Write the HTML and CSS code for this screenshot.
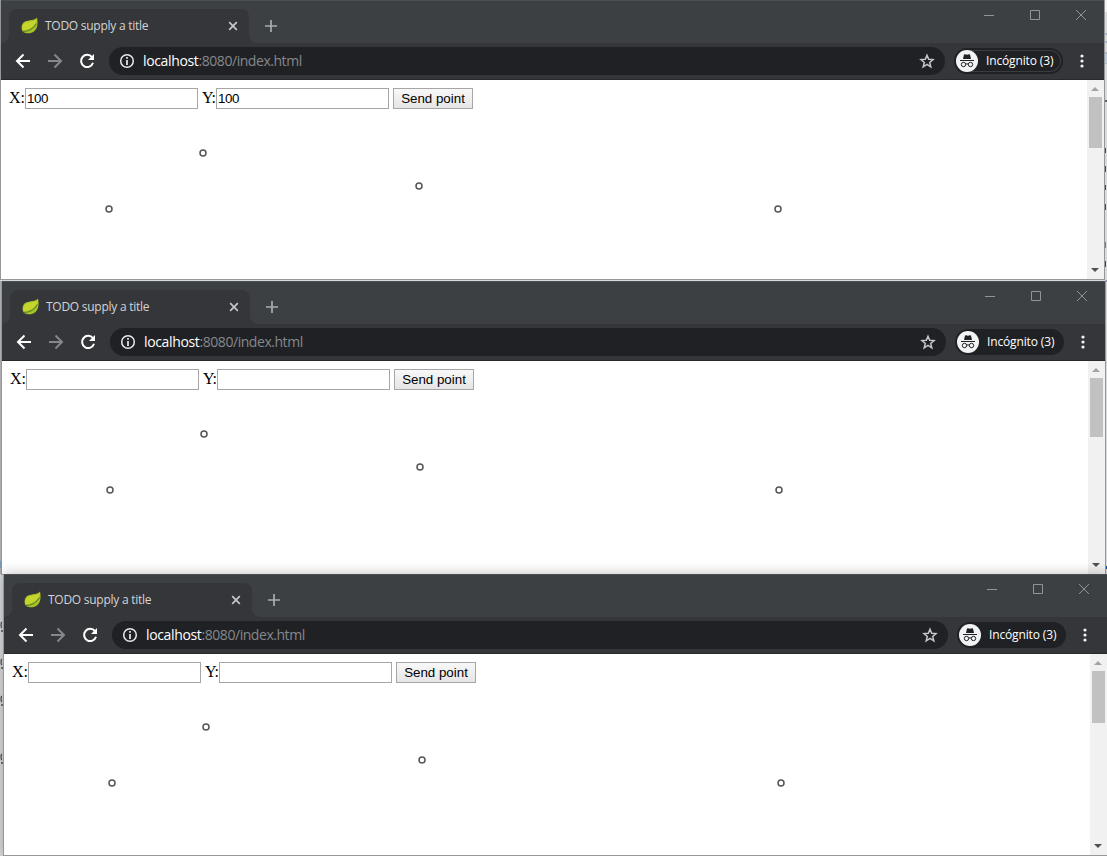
FILE: index.html
```html
<!DOCTYPE html>
<html lang="es">
<head>
<meta charset="utf-8">
<title>TODO supply a title</title>
<link rel="stylesheet" href="styles.css">
</head>
<body>
<svg class="defs" aria-hidden="true">
  <symbol id="leaf" viewBox="0 0 17 17"><path d="M16 .5C13.500 3.500 8 3 4 4.500C0 6.500-.2 12 2 14.800C4.500 17 10.500 16.800 13.500 14C17 10.700 17 5 16 .5Z" fill="#a6c225"/><path d="M15.300 2C12.500 5 8 4 4.500 5.500C1 7.500 .6 11.500 1.500 13.300C7 13 12 11 15.500 5Z" fill="#c6d52c"/><path d="M2 14.500C8 14.500 12.500 11.500 15.500 6.500" fill="none" stroke="#58852a" stroke-width="1.100"/></symbol>
  <symbol id="close" viewBox="0 0 10 10"><path d="M1.200 1.200L8.800 8.800M8.800 1.200L1.200 8.800" stroke="#c5c7ca" stroke-width="1.700"/></symbol>
  <symbol id="plus" viewBox="0 0 12 12"><path d="M6 0V12M0 6H12" stroke="#a9acaf" stroke-width="1.700"/></symbol>
  <symbol id="back" viewBox="0 0 16 16"><path d="M15 8H2M8.500 1.500L2 8L8.500 14.500" fill="none" stroke="currentColor" stroke-width="2"/></symbol>
  <symbol id="reload" viewBox="0 0 16 16"><path d="M13 4.200A6.100 6.100 0 1 0 14 9.800" fill="none" stroke="#fff" stroke-width="2"/><path d="M15 1V7H9Z" fill="#fff"/></symbol>
  <symbol id="info" viewBox="0 0 16 16"><circle cx="8" cy="8" r="6.300" fill="none" stroke="#e8eaed" stroke-width="1.500"/><path d="M8 4V5.700M8 7V12" stroke="#e8eaed" stroke-width="1.700"/></symbol>
  <symbol id="star" viewBox="0 0 16 16"><path d="M8 2.200L9.700 6.300L14 6.600L10.700 9.400L11.800 13.800L8 11.400L4.200 13.800L5.300 9.400L2 6.600L6.300 6.300Z" fill="none" stroke="#c4c6c9" stroke-width="1.500"/></symbol>
  <symbol id="spy" viewBox="0 0 22 22"><circle cx="11" cy="11" r="11" fill="#f1f3f4"/><path d="M7 9L8 4.500Q9 4 11 4.700Q13 4 14 4.500L15 9ZM4 10H18V11H4Z" fill="#202124"/><path d="M9.500 14.200Q11 13.400 12.500 14.200" fill="none" stroke="#202124"/><circle cx="7.500" cy="14.500" r="2.200" fill="none" stroke="#202124"/><circle cx="14.500" cy="14.500" r="2.200" fill="none" stroke="#202124"/></symbol>
  <symbol id="dots" viewBox="0 0 4 14"><g fill="#f1f3f4"><circle cx="2" cy="2" r="1.600"/><circle cx="2" cy="7" r="1.600"/><circle cx="2" cy="12" r="1.600"/></g></symbol>
  <symbol id="controls" viewBox="0 0 102 12"><path d="M0 6.500H10M46.500 1.500H55.500V10.500H46.500ZM92 1L102 11M102 1L92 11" fill="none" stroke="#929496"/></symbol>
  <symbol id="points" viewBox="0 0 1086 199"><g fill="none" stroke="#555" stroke-width="1.500"><circle cx="202" cy="73" r="3"/><circle cx="418" cy="106" r="3"/><circle cx="108" cy="129" r="3"/><circle cx="777" cy="129" r="3"/></g></symbol>
</svg>
<main class="desktop">
  <svg class="backdrop" viewBox="0 0 1107 856" aria-hidden="true">
    <path d="M0 0H1V280H0ZM0 281H2V574H0Z" fill="#a9abae"/>
    <path d="M1105 0H1107V12H1105Z" fill="#f4f4f4"/>
    <path d="M1105 34H1107M1105 42H1107M1105 53H1107M1105 63H1107" stroke="#7d93bb"/>
    <path d="M1105 54H1107V63H1105Z" fill="#bccbe9"/>
    <path d="M1105 101H1107" stroke="#666" stroke-width="2"/>
    <path d="M0 561H1V568H0Z" fill="#7895b5"/>
    <path d="M1105 566H1107V569H1105Z" fill="#164aa0"/>
    <path d="M1.800 622C.8 623 .8 627 1.800 628M1 631H3M1.800 659C.8 660 .8 664 1.800 665M1 668H3M1.800 696C.8 697 .8 701 1.800 702M1 705H3M1.800 754C.8 755 .8 759 1.800 760M1 763H3" fill="none" stroke="#555" stroke-width="1.300"/>
    <path d="M1105.500 148V153M1105.500 166V172M1105.500 185V190M1105.500 204V210M1105.500 261V267M1105.500 281H1107" stroke="#46446e"/>
    <path d="M1105.500 242V248" stroke="#559064"/>
    <path d="M1105.500 300V305" stroke="#477ba3"/>
  </svg>
  <section class="window window-one">
    <header class="tabs"><div class="tab"><svg class="leaf"><use href="#leaf"/></svg><span class="title">TODO supply a title</span><svg class="close"><use href="#close"/></svg></div><svg class="plus"><use href="#plus"/></svg><svg class="controls"><use href="#controls"/></svg></header>
    <nav class="toolbar"><svg class="nav-icon"><use href="#back"/></svg><svg class="nav-icon forward"><use href="#back"/></svg><svg class="nav-icon"><use href="#reload"/></svg><div class="address"><svg class="small-icon"><use href="#info"/></svg><span class="url"><b>localhost</b>:8080/index.html</span><svg class="small-icon star"><use href="#star"/></svg></div><div class="profile focused"><svg class="spy"><use href="#spy"/></svg><span>Incógnito (3)</span></div><svg class="dots"><use href="#dots"/></svg></nav>
    <div class="page"><div class="content"><svg class="points"><use href="#points"/></svg><form class="form"><label class="label-x">X:</label><input value="100"><label class="label-y">Y:</label><input value="100"><button type="button">Send point</button></form></div><aside class="scrollbar"><i class="up"></i><i class="thumb"></i><i class="down"></i></aside></div>
  </section>
  <section class="window window-two">
    <header class="tabs"><div class="tab"><svg class="leaf"><use href="#leaf"/></svg><span class="title">TODO supply a title</span><svg class="close"><use href="#close"/></svg></div><svg class="plus"><use href="#plus"/></svg><svg class="controls"><use href="#controls"/></svg></header>
    <nav class="toolbar"><svg class="nav-icon"><use href="#back"/></svg><svg class="nav-icon forward"><use href="#back"/></svg><svg class="nav-icon"><use href="#reload"/></svg><div class="address"><svg class="small-icon"><use href="#info"/></svg><span class="url"><b>localhost</b>:8080/index.html</span><svg class="small-icon star"><use href="#star"/></svg></div><div class="profile"><svg class="spy"><use href="#spy"/></svg><span>Incógnito (3)</span></div><svg class="dots"><use href="#dots"/></svg></nav>
    <div class="page"><div class="content"><svg class="points"><use href="#points"/></svg><form class="form"><label class="label-x">X:</label><input><label class="label-y">Y:</label><input><button type="button">Send point</button></form></div><aside class="scrollbar"><i class="up"></i><i class="thumb"></i><i class="down"></i></aside></div>
  </section>
  <section class="window window-three">
    <header class="tabs"><div class="tab"><svg class="leaf"><use href="#leaf"/></svg><span class="title">TODO supply a title</span><svg class="close"><use href="#close"/></svg></div><svg class="plus"><use href="#plus"/></svg><svg class="controls"><use href="#controls"/></svg></header>
    <nav class="toolbar"><svg class="nav-icon"><use href="#back"/></svg><svg class="nav-icon forward"><use href="#back"/></svg><svg class="nav-icon"><use href="#reload"/></svg><div class="address"><svg class="small-icon"><use href="#info"/></svg><span class="url"><b>localhost</b>:8080/index.html</span><svg class="small-icon star"><use href="#star"/></svg></div><div class="profile"><svg class="spy"><use href="#spy"/></svg><span>Incógnito (3)</span></div><svg class="dots"><use href="#dots"/></svg></nav>
    <div class="page"><div class="content"><svg class="points"><use href="#points"/></svg><form class="form"><label class="label-x">X:</label><input><label class="label-y">Y:</label><input><button type="button">Send point</button></form></div><aside class="scrollbar"><i class="up"></i><i class="thumb"></i><i class="down"></i></aside></div>
  </section>
</main>
</body>
</html>
```
FILE: styles.css
```css
* { box-sizing: border-box; }
body { margin: 0; overflow: hidden; }
svg { display: block; flex: none; }
.defs { position: absolute; width: 0; height: 0; }
.desktop { position: relative; width: 1107px; height: 856px; overflow: hidden; background: #d9dadc; }
.backdrop { position: absolute; left: 0; top: 0; width: 1107px; height: 856px; }
.window { position: absolute; width: 1105px; display: flex; flex-direction: column; border: 1px solid #979797; border-top: 0; background: #fff; }
.window-one { left: 0; top: 0; height: 280px; }
.window-two { left: 1px; top: 281px; height: 294px; }
.window-three { left: 3px; top: 574px; height: 282px; box-shadow: 0 0 12px #0004; }
.tabs { height: 43px; flex: none; display: flex; padding: 8px 13px 0 8px; background: #3c4043; border-top: 1px solid #4b4f52; }
.tab { position: relative; width: 240px; height: 34px; display: flex; align-items: center; padding: 0 11px 1px 12px; border-radius: 8px 8px 0 0; background: #35363a; }
.tab::before, .tab::after { content: ""; position: absolute; bottom: 0; width: 8px; height: 8px; }
.tab::before { left: -8px; background: radial-gradient(circle at 0 0, transparent 7.5px, #35363a 8px); }
.tab::after { right: -8px; background: radial-gradient(circle at 100% 0, transparent 7.5px, #35363a 8px); }
.leaf { width: 17px; height: 17px; }
.title { margin-left: 7px; font: 12px "Open Sans", sans-serif; letter-spacing: -.26px; color: #d2d4d6; white-space: nowrap; }
.close { width: 10px; height: 10px; margin-left: auto; }
.plus { width: 12px; height: 12px; margin: 11px 0 0 16px; }
.controls { width: 102px; height: 12px; margin-left: auto; margin-right: 5px; }
.toolbar { height: 37px; flex: none; display: flex; align-items: center; padding: 0 20px 1px 14px; background: #35363a; border-bottom: 1px solid #28292c; color: #fff; }
.nav-icon { width: 16px; height: 16px; margin-right: 16px; }
.forward { transform: scaleX(-1); color: #85878a; }
.address { width: 836px; height: 28px; display: flex; align-items: center; margin-left: -2px; padding: 0 10px; border-radius: 14px; background: #202124; }
.small-icon { width: 16px; height: 16px; }
.url { margin-left: 8px; font: 14px "Open Sans", sans-serif; letter-spacing: -.45px; color: #85888c; white-space: nowrap; }
.url b { font-weight: 400; letter-spacing: -.35px; color: #fff; }
.star { margin-left: auto; }
.profile { width: 109px; height: 26px; display: flex; align-items: center; gap: 8px; margin-left: 9px; padding-left: 2px; border-radius: 13px; background: #202124; font: 12px "Open Sans", sans-serif; letter-spacing: -.14px; white-space: nowrap; }
.focused { box-shadow: inset 0 0 0 2px #202124, inset 0 0 0 3px #3b3c40; }
.spy { width: 22px; height: 22px; }
.dots { width: 4px; height: 14px; margin-left: auto; }
.page { flex: 1; min-height: 0; display: flex; }
.content { position: relative; flex: 1; padding: 8px; }
.points { position: absolute; left: 0; top: 0; width: 1086px; height: 199px; }
.form { position: relative; display: flex; height: 21px; font: 16px "Liberation Serif", serif; color: #000; }
.label-x { width: 16px; padding-top: 1px; }
.label-y { width: 14px; margin-left: 4px; padding-top: 1px; letter-spacing: -.5px; }
input { width: 173px; height: 21px; padding: 1px; border: 1px solid #a6a6a6; background: #fff; font: 13.333px "Liberation Sans", sans-serif; letter-spacing: -.35px; color: #000; }
button { width: 80px; height: 21px; margin-left: 4px; padding: 0; border: 1px solid #a6a6a6; border-radius: 0; background: linear-gradient(#f8f8f8, #e5e5e5); font: 13.333px "Liberation Sans", sans-serif; color: #000; }
.scrollbar { width: 17px; display: flex; flex-direction: column; align-items: center; background: #f1f1f1; }
.up { margin: 7px 1px 6px 0; border: 4px solid transparent; border-top: 0; border-bottom-color: #a3a3a3; }
.thumb { width: 13px; height: 51px; background: #c1c1c1; }
.window-two .thumb { height: 59px; }
.window-three .thumb { height: 52px; }
.down { margin: auto 1px 7px 0; border: 4px solid transparent; border-bottom: 0; border-top-color: #505050; }
```
